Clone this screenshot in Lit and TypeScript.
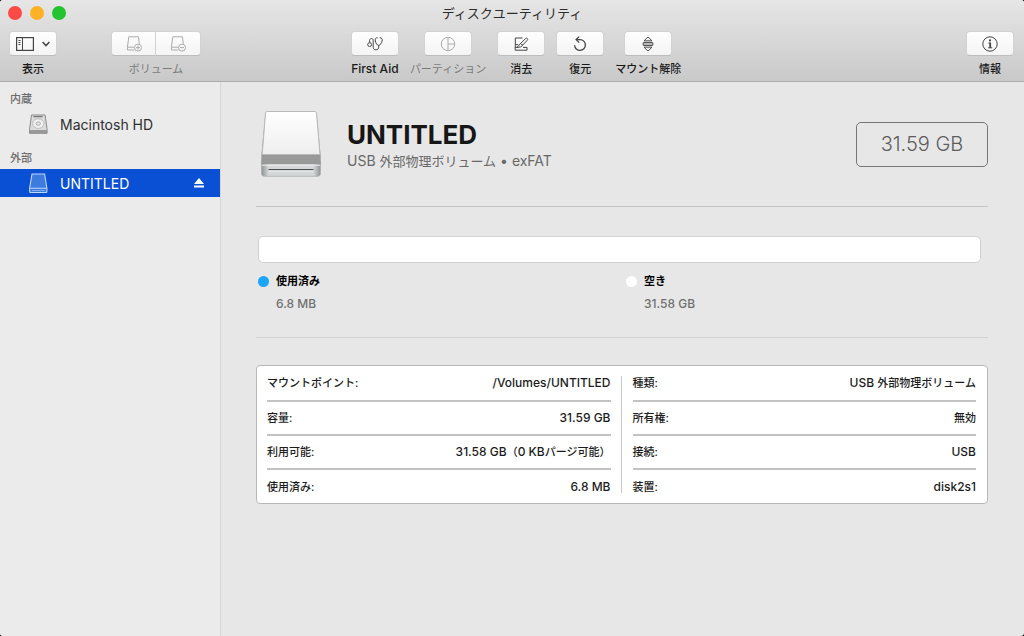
import { LitElement, html, css, svg, type TemplateResult } from "lit";
import { customElement, property } from "lit/decorators.js";

type Tool = { label: string; icon: TemplateResult; disabled?: boolean; latin?: boolean };
type Run = { text: string; cjk?: boolean };
type Row = { name: string; value: Run[] };

const firstAid = svg`
  <circle cx="2.6" cy="8.6" r="1.9"/>
  <path d="M2.6 6.6V4.4c0-2.4 3.6-2.6 3.6 0v7c0 1.5 1 2.4 2.6 2.4s2.9-.9 2.9-2.5v-2"/>
  <path d="M10.6 1.9C8.5 1.4 7.9 3 8.3 5c.5 2.2 1.7 4.3 3.3 4.3s3-2.1 3.5-4.3c.4-2-.3-3.6-2.4-3.1"/>`;
const partition = svg`<circle cx="8" cy="8" r="6.7"/><path d="M8 1.3v13.4M8 8h6.7"/>`;
const erase = svg`
  <path d="M9.6 2H2.3v9M2.3 8.6h2.8M1.8 11.4h3.6M10 11.4h4v2.8H2.2v-2.8"/>
  <path d="M14.2 2.4c.6.5.6 1 .2 1.7l-4.7 5-2.3-1.5 5.2-5c.6-.5 1.2-.6 1.6-.2zM7.4 7.6c-1 .4-1 1.9-3 3.2 2 .7 4.4.4 5.3-1.7"/>`;
const restore = svg`<path stroke-width="1.3" d="M2.6 9.2a5.4 5.4 0 1 0 5.4-5.6H4.2M7.2.6 4.1 3.6l3.1 3"/>`;
const unmount = svg`
  <path stroke-width=".9" d="M4 4.8 8 .9l4 3.9zM4 11.2 8 15.1l4-3.9z"/>
  <rect x="3.2" y="6.4" width="9.6" height="3.2" rx=".5"/><path stroke-width=".7" d="M3.4 8h9.2"/>`;
const info = svg`
  <circle cx="8" cy="8" r="7.2"/>
  <path stroke-width="1.8" d="M8.2 6.8v5"/><path d="M6.4 7h2.4M6.2 11.8h4"/>
  <circle cx="8" cy="4.4" r="1.1" fill="currentColor" stroke="none"/>`;
const volume = (sign: string) => svg`
  <path d="M8.4 14H1.4v-2.6L2.8.8h9.6l1 7M1.6 11.2h6.4"/>
  <circle cx="12" cy="11.6" r="3.5"/><path d="${sign}"/>`;
const volumeAdd = volume("M10 11.6h4M12 9.6v4");
const volumeRemove = volume("M10 11.6h4");

const icon = (shape: TemplateResult) => html`
  <svg class="glyph" viewBox="0 0 16 16" fill="none" stroke="currentColor" stroke-width="1" aria-hidden="true">${shape}</svg>`;

const buttonStyles = css`
  .button {
    display: flex; align-items: center; justify-content: center; gap: 8px;
    width: 48px; height: 25px; padding: 0; box-sizing: border-box;
    border: 1px solid #d2d2d2; border-bottom-color: #bdbdbd; border-radius: 4px;
    background: linear-gradient(#fefefe, #f4f4f4); color: #444; font: inherit;
  }
  .button:disabled { color: #ababab; }
  .glyph { width: 16px; height: 16px; }
  .cluster { display: flex; flex-direction: column; align-items: center; gap: 5px; min-width: 48px; }
  .caption { font-size: 11px; line-height: 16px; white-space: nowrap; font-weight: 500; color: #1b1b1b; }
  .latin { font-size: 12px; }
  .dim { color: #7b7b7b; font-weight: 400; }
`;

@customElement("tool-item")
class ToolItem extends LitElement {
  @property({ attribute: false }) tool!: Tool;

  static styles = [buttonStyles, css`:host { display: flex; }`];

  render() {
    const { label, icon: shape, disabled, latin } = this.tool;
    return html`<div class="cluster">
      <button class="button" aria-labelledby="label" ?disabled=${disabled}>${icon(shape)}</button>
      <span id="label" class="caption ${latin ? "latin" : ""} ${disabled ? "dim" : ""}">${label}</span>
    </div>`;
  }
}

@customElement("info-table")
class InfoTable extends LitElement {
  @property({ attribute: false }) rows: Row[] = [];

  static styles = css`
    :host { display: block; flex: 1; min-width: 0; }
    .table { width: 100%; border-collapse: separate; border-spacing: 0; color: #1c1c1c; font-weight: 500; }
    .name, .value { height: 32px; padding: 0; border-bottom: 2px solid #c3c3c3; white-space: nowrap; line-height: 16px; }
    .row:first-child .name, .row:first-child .value { height: 34px; }
    .row:last-child .name, .row:last-child .value { height: 33px; border-bottom: 0; }
    .name { text-align: left; font-size: 11px; font-weight: 500; }
    .value { text-align: right; font-size: 12px; }
    .cjk { font-size: 11px; }
  `;

  render() {
    return html`<table class="table"><tbody>
      ${this.rows.map(
        (row) => html`<tr class="row">
          <th class="name" scope="row">${row.name}</th>
          <td class="value">${row.value.map((run) => (run.cjk ? html`<span class="cjk">${run.text}</span>` : run.text))}</td>
        </tr>`,
      )}
    </tbody></table>`;
  }
}

@customElement("app-root")
class AppRoot extends LitElement {
  private tools: Tool[] = [
    { label: "First Aid", icon: firstAid, latin: true },
    { label: "パーティション", icon: partition, disabled: true },
    { label: "消去", icon: erase },
    { label: "復元", icon: restore },
    { label: "マウント解除", icon: unmount },
  ];

  private left: Row[] = [
    { name: "マウントポイント:", value: [{ text: "/Volumes/UNTITLED" }] },
    { name: "容量:", value: [{ text: "31.59 GB" }] },
    { name: "利用可能:", value: [{ text: "31.58 GB" }, { text: "（", cjk: true }, { text: "0 KB" }, { text: "パージ可能）", cjk: true }] },
    { name: "使用済み:", value: [{ text: "6.8 MB" }] },
  ];

  private right: Row[] = [
    { name: "種類:", value: [{ text: "USB " }, { text: "外部物理ボリューム", cjk: true }] },
    { name: "所有権:", value: [{ text: "無効", cjk: true }] },
    { name: "接続:", value: [{ text: "USB" }] },
    { name: "装置:", value: [{ text: "disk2s1" }] },
  ];

  static styles = [buttonStyles, css`
    :host {
      display: flex; flex-direction: column; min-height: 100vh; overflow: hidden;
      background: #000; color: #1c1c1c;
      font-family: Inter, "Noto Sans CJK JP", sans-serif;
    }
    .window { flex: 1; display: flex; flex-direction: column; border-radius: 3px; overflow: hidden; background: #e7e7e7; }
    .header { background: linear-gradient(#e6e6e6, #c9c9c9); border-bottom: 1px solid #adadad; }
    .titlebar { display: grid; grid-template-columns: 1fr auto 1fr; align-items: center; height: 25px; padding: 0 8px; }
    .lights { display: flex; gap: 8px; }
    .light { width: 14px; height: 14px; padding: 0; border: 0; border-radius: 50%; }
    .close { background: #fc4b47; }
    .minimize { background: #fdb225; }
    .zoom { background: #24c332; }
    .title { margin: 0; font-size: 13px; line-height: 20px; font-weight: 400; color: #2c2c2c; }
    .toolbar { display: flex; padding: 6px 10px 4px 9px; }
    .near { flex: 10; }
    .far { flex: 19; }
    .tools { display: flex; gap: 11px; }
    .volume { margin-left: 54px; }
    .segments { display: flex; }
    .segment { width: 45px; }
    .segment:first-child { border-radius: 4px 0 0 4px; }
    .segment:last-child { border-radius: 0 4px 4px 0; border-left: 0; }
    .panes { width: 18px; height: 14px; }
    .chevron { width: 8px; height: 6px; }

    .body { flex: 1; display: flex; }
    .sidebar { flex: none; width: 221px; box-sizing: border-box; padding-top: 6px; background: #ebebeb; border-right: 1px solid #d6d6d6; }
    .section { margin: 0; padding-left: 10px; font-size: 11px; line-height: 22px; font-weight: 500; color: #6c6c6c; }
    .list { margin: 0 0 9px; padding: 0; list-style: none; }
    .item { display: flex; align-items: center; height: 28px; padding: 0 15px 0 28px; gap: 11px; font-size: 14px; color: #2e2e2e; }
    .name { flex: 1; color: inherit; text-decoration: none; }
    .selected { background: #0a50d5; color: #fff; }
    .disk { width: 21px; height: 22px; }
    .eject { width: 12px; height: 12px; padding: 0; border: 0; background: none; color: inherit; display: flex; }

    .main { flex: 1; min-width: 0; padding: 28px 36px 28px 35px; }
    .summary { display: flex; align-items: center; height: 68px; padding: 0 0 28px 4px; gap: 25px; }
    .drive { flex: none; width: 62px; height: 68px; }
    .heading { flex: 1; padding-top: 4px; }
    .volume-name { margin: 0; font-size: 26px; line-height: 30px; font-weight: 700; color: #161616; }
    .kind { margin: 0; font-size: 14px; line-height: 22px; color: #686868; }
    .kind-cjk { font-size: 13px; }
    .capacity { width: 132px; box-sizing: border-box; border: 1px solid #777; border-radius: 5px; text-align: center; font-size: 20px; line-height: 43px; font-weight: 300; color: #5c5c5c; }
    .rule { margin: 0; border: 0; border-top: 1px solid #c6c6c6; }
    .usage { padding: 29px 0 22px; }
    .bar { height: 27px; box-sizing: border-box; margin: 0 7px 0 2px; border: 1px solid #d0d0d0; border-radius: 5px; background: #fff; }
    .legend { display: grid; grid-template-columns: 1fr 1fr; gap: 8px; margin: 7px 2px 0; }
    .entry { display: grid; grid-template-columns: 11px 1fr; gap: 1px 7px; align-items: center; }
    .dot { width: 11px; height: 11px; border-radius: 50%; }
    .used { background: #1ba5fb; }
    .free { background: #fff; }
    .what { font-size: 11px; line-height: 22px; font-weight: 700; color: #000; }
    .amount { grid-column: 2; font-size: 12px; line-height: 22px; font-weight: 500; color: #707070; }
    .soft { border-color: #d2d2d2; }
    .details { display: flex; gap: 10px; margin-top: 27px; padding: 0 11px 0 10px; border: 1px solid #b8b8b8; border-radius: 4px; background: #fff; }
    .divider { width: 1px; margin: 10px 1px 10px 0; background: #c8c8c8; }
  `];

  private renderHeader() {
    return html`<header class="header">
      <div class="titlebar">
        <div class="lights">
          <button class="light close" aria-label="閉じる"></button>
          <button class="light minimize" aria-label="しまう"></button>
          <button class="light zoom" aria-label="拡大"></button>
        </div>
        <h1 class="title">ディスクユーティリティ</h1>
      </div>
      <div class="toolbar">
        <div class="cluster">
          <button class="button" aria-labelledby="view">
            <svg class="panes" viewBox="0 0 18 14" fill="none" stroke="currentColor" aria-hidden="true">
              <rect x=".6" y=".6" width="16.8" height="12.8" stroke-width="1.2"/><path d="M6.5.6v12.8M2.5 3.5h2M2.5 5.5h2M2.5 7.5h2"/>
            </svg>
            <svg class="chevron" viewBox="0 0 8 6" fill="none" stroke="currentColor" stroke-width="1.5" aria-hidden="true"><path d="M.6 1 4 4.6 7.4 1"/></svg>
          </button>
          <span class="caption" id="view">表示</span>
        </div>
        <div class="cluster volume">
          <div class="segments" role="group" aria-labelledby="volume">
            <button class="button segment" aria-label="追加" disabled>${icon(volumeAdd)}</button>
            <button class="button segment" aria-label="削除" disabled>${icon(volumeRemove)}</button>
          </div>
          <span class="caption dim" id="volume">ボリューム</span>
        </div>
        <div class="near"></div>
        <div class="tools">${this.tools.map((tool) => html`<tool-item .tool=${tool}></tool-item>`)}</div>
        <div class="far"></div>
        <tool-item .tool=${{ label: "情報", icon: info }}></tool-item>
      </div>
    </header>`;
  }

  private renderSidebar() {
    return html`<nav class="sidebar">
      <h2 class="section">内蔵</h2>
      <ul class="list">
        <li class="item">
          <svg class="disk" viewBox="0 0 21 22" aria-hidden="true">
            <path d="M3.5 2h13.6l2 14.5v3.8H1.5v-3.8z" fill="#dcdcdc" stroke="#8a8a8a"/>
            <path d="M1.6 17h17.4v3.3H1.6z" fill="#999"/>
            <ellipse cx="10.3" cy="10.6" rx="5.6" ry="4.8" fill="#f1f1f1" stroke="#b0b0b0" stroke-width=".8"/>
            <ellipse cx="10.3" cy="10.6" rx="2.2" ry="1.7" fill="#e6e6e6" stroke="#9a9a9a" stroke-width=".8"/>
            <path d="M5.5 3.6h9" stroke="#777" stroke-width="1.4"/>
          </svg>
          <a class="name" href="#macintosh-hd">Macintosh HD</a>
        </li>
      </ul>
      <h2 class="section">外部</h2>
      <ul class="list">
        <li class="item selected">
          <svg class="disk" viewBox="0 0 21 22" aria-hidden="true">
            <path d="M4 2h12.6l2.3 14.4v3.1c0 .6-.4 1-1 1H2.6c-.6 0-1-.4-1-1v-3.1z" fill="#3e7bdf" stroke="#c1d6f8" stroke-width="1.1"/>
            <path d="M1.8 16.3h17" stroke="#c1d6f8" stroke-width="1.1"/><path d="M4 18.5h12.6" stroke="#8fb4f0" stroke-width=".8"/>
          </svg>
          <a class="name" href="#untitled" aria-current="true">UNTITLED</a>
          <button class="eject" aria-label="取り出す">
            <svg width="12" height="12" viewBox="0 0 12 12" fill="currentColor" aria-hidden="true"><path d="M6 1l5 6H1zM1 8.4h10v2H1z"/></svg>
          </button>
        </li>
      </ul>
    </nav>`;
  }

  private renderDrive() {
    return html`<svg class="drive" viewBox="0 0 62 68" aria-hidden="true">
      <defs>
        <linearGradient id="top" x2="0" y2="1"><stop offset="0" stop-color="#fff"/><stop offset="1" stop-color="#eeeeef"/></linearGradient>
        <linearGradient id="rim"><stop offset="0" stop-color="#8f9393"/><stop offset=".12" stop-color="#d4d7d7"/><stop offset=".88" stop-color="#d4d7d7"/><stop offset="1" stop-color="#8f9393"/></linearGradient>
      </defs>
      <path d="M1.5 54 3 46h56l1.5 8v9.5c0 1.6-1.2 2.8-2.8 2.8H4.3c-1.6 0-2.8-1.2-2.8-2.8z" fill="url(#rim)" stroke="#aaaeae" stroke-width=".8"/>
      <path d="M7.2 1.5h47.6c1 0 1.8.7 1.9 1.7L60.7 46v8.2H1.3V46L5.3 3.2c.1-1 .9-1.7 1.9-1.7z" fill="#999"/>
      <path d="M7.4 1.5h47.2c1 0 1.7.6 1.9 1.6L60 44.5H2.2L5.5 3.1c.2-1 .9-1.6 1.9-1.6z" fill="url(#top)" stroke="#b9baba"/>
      <path d="M2 55.2h58" stroke="#eff1f1"/>
      <path d="M8.5 59.6h45" stroke="#4d5252" stroke-width="1.1"/><path d="M8.5 61h45" stroke="#f4f6f6"/>
    </svg>`;
  }

  render() {
    return html`<div class="window">
      ${this.renderHeader()}
      <div class="body">
        ${this.renderSidebar()}
        <main class="main">
          <section class="summary">
            ${this.renderDrive()}
            <div class="heading">
              <h2 class="volume-name">UNTITLED</h2>
              <p class="kind">USB <span class="kind-cjk">外部物理ボリューム</span> • exFAT</p>
            </div>
            <div class="capacity">31.59 GB</div>
          </section>
          <hr class="rule" />
          <section class="usage">
            <div class="bar"></div>
            <div class="legend">
              <div class="entry"><span class="dot used"></span><span class="what">使用済み</span><span class="amount">6.8 MB</span></div>
              <div class="entry"><span class="dot free"></span><span class="what">空き</span><span class="amount">31.58 GB</span></div>
            </div>
          </section>
          <hr class="rule soft" />
          <section class="details">
            <info-table .rows=${this.left}></info-table>
            <div class="divider"></div>
            <info-table .rows=${this.right}></info-table>
          </section>
        </main>
      </div>
    </div>`;
  }
}
